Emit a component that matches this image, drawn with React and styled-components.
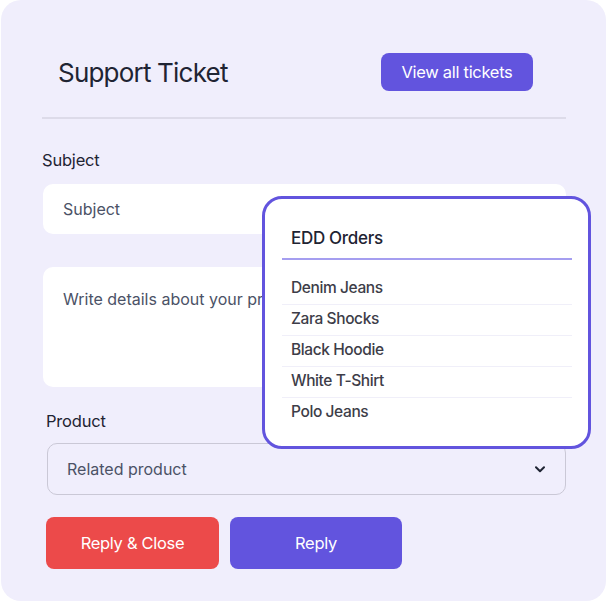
import React from 'react';
import styled, { createGlobalStyle } from 'styled-components';

const GlobalStyle = createGlobalStyle`
  * { box-sizing: border-box; }
  body {
    margin: 0;
    background: #ffffff;
    font-family: Inter, "Noto Sans", sans-serif;
  }
`;

const Card = styled.div`
  position: relative;
  width: 605px;
  height: 601px;
  margin-left: 1px;
  padding: 53px 40px 0 41px;
  background: #f0eefc;
  border-radius: 20px;
`;

const Header = styled.div`
  display: flex;
  align-items: center;
  justify-content: space-between;
  height: 38px;
  padding: 0 33px 0 16px;
`;

const Title = styled.h1`
  margin: 0;
  font-size: 26px;
  font-weight: 400;
  color: #1f2433;
  letter-spacing: -0.8px;
`;

const Button = styled.button`
  display: flex;
  align-items: center;
  justify-content: center;
  width: ${p => p.w}px;
  height: ${p => p.h}px;
  border: none;
  border-radius: 8px;
  background: ${p => (p.danger ? '#ec4a4a' : '#6254de')};
  color: #ffffff;
  font-family: inherit;
  font-size: 16.5px;
  font-weight: 400;
  letter-spacing: -0.3px;
  cursor: pointer;
`;

const Divider = styled.hr`
  margin: 26px 0 0;
  height: 2px;
  border: none;
  background: #dddbe9;
`;

const Label = styled.div`
  margin: ${p => p.mt}px 0 0 ${p => p.ml || 0}px;
  font-size: 16.5px;
  line-height: 20px;
  color: #1f2433;
  letter-spacing: -0.2px;
`;

const Input = styled.div`
  display: flex;
  align-items: center;
  margin: 14px 0 0 1px;
  height: 50px;
  padding: 0 20px;
  background: #ffffff;
  border-radius: 10px;
  font-size: 16px;
  color: #4b5266;
`;

const TextArea = styled.div`
  margin: 33px 0 0 1px;
  height: 120px;
  padding: 22px 20px 0;
  background: #ffffff;
  border-radius: 10px;
  font-size: 16px;
  line-height: 20px;
  color: #4b5266;
  white-space: nowrap;
  overflow: hidden;
`;

const Select = styled.div`
  display: flex;
  align-items: center;
  justify-content: space-between;
  margin: 12px 0 0 5px;
  height: 52px;
  padding: 0 20px 0 19px;
  border: 1px solid #cac8d6;
  border-radius: 10px;
  font-size: 16px;
  color: #4b5266;
`;

const Actions = styled.div`
  display: flex;
  gap: 11px;
  margin: 22px 0 0 4px;
`;

const Popup = styled.div`
  position: absolute;
  left: 261px;
  top: 196px;
  width: 329px;
  height: 253px;
  padding: 29px 16px 0 17px;
  background: #ffffff;
  border: 3px solid #6254de;
  border-radius: 20px;
`;

const PopupTitle = styled.div`
  padding: 0 0 10px 9px;
  border-bottom: 2px solid #a59ef0;
  font-size: 17px;
  font-weight: 500;
  line-height: 20px;
  letter-spacing: -0.3px;
  color: #1f2433;
`;

const List = styled.ul`
  margin: 14px 0 0;
  padding: 0;
  list-style: none;
`;

const Item = styled.li`
  padding: 4px 0 6px 9px;
  border-bottom: 1.5px solid #f0eff9;
  font-size: 15.5px;
  font-weight: 500;
  line-height: 20px;
  letter-spacing: -0.4px;
  color: #3d3d48;
  &:last-child { border-bottom: none; }
`;

const Chevron = () => (
  <svg width="10" height="7" viewBox="0 0 10 7" fill="none">
    <polyline points="1,1.2 5,5.2 9,1.2" stroke="#1f2433" strokeWidth="2" strokeLinecap="round" strokeLinejoin="round" />
  </svg>
);

const orders = ['Denim Jeans', 'Zara Shocks', 'Black Hoodie', 'White T-Shirt', 'Polo Jeans'];

export default function App() {
  return (
    <>
      <GlobalStyle />
      <Card>
        <Header>
          <Title>Support Ticket</Title>
          <Button w={152} h={38}>View all tickets</Button>
        </Header>
        <Divider />
        <Label mt={31}>Subject</Label>
        <Input>Subject</Input>
        <TextArea>Write details about your problem</TextArea>
        <Label mt={24} ml={4}>Product</Label>
        <Select>
          <span>Related product</span>
          <Chevron />
        </Select>
        <Actions>
          <Button danger w={173} h={52}>Reply &amp; Close</Button>
          <Button w={172} h={52}>Reply</Button>
        </Actions>
        <Popup>
          <PopupTitle>EDD Orders</PopupTitle>
          <List>
            {orders.map(o => <Item key={o}>{o}</Item>)}
          </List>
        </Popup>
      </Card>
    </>
  );
}
